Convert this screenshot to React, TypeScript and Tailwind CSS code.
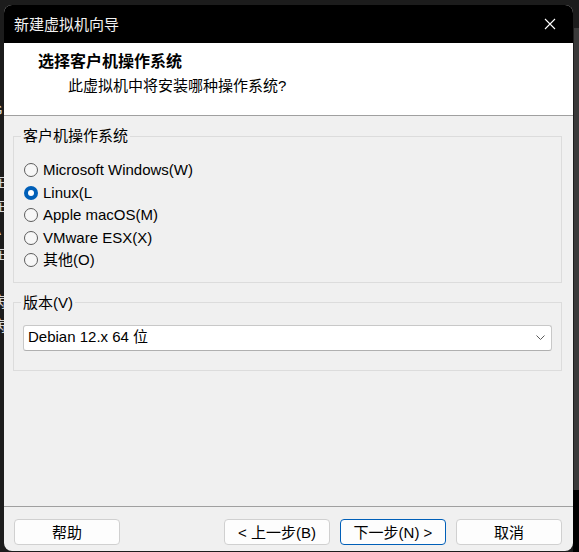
import React from "react";

const os = [
  { label: "Microsoft Windows(W)", checked: false },
  { label: "Linux(L", checked: true },
  { label: "Apple macOS(M)", checked: false },
  { label: "VMware ESX(X)", checked: false },
  { label: "其他(O)", checked: false },
];

// bits of the window behind the dialog, peeking out on the left
const behind = ["G", "", "(", "在", "在", "A", "在", "", "病", "病"];

function Radio({ checked }: { checked: boolean }) {
  if (checked) {
    return (
      <span className="w-[14px] h-[14px] rounded-full bg-[#005fb8] flex items-center justify-center shrink-0">
        <span className="w-[6px] h-[6px] rounded-full bg-white" />
      </span>
    );
  }
  return <span className="w-[14px] h-[14px] rounded-full border border-[#5c5c5c] bg-[#f7f7f7] shrink-0" />;
}

function Button({ children, primary }: { children: React.ReactNode; primary?: boolean }) {
  return (
    <button
      className={
        primary
          ? "w-[106px] h-[26px] rounded-[4px] border border-[#005fb8] bg-[#fdfdfd] text-[15px] text-black leading-none"
          : "w-[106px] h-[26px] rounded-[4px] border border-[#d0d0d0] bg-[#fdfdfd] text-[15px] text-black leading-none"
      }
    >
      {children}
    </button>
  );
}

export default function App() {
  return (
    <div className="w-[579px] h-[552px] bg-[#1c1c1c] flex overflow-hidden font-['Liberation_Sans','Noto_Sans_CJK_SC',sans-serif]">
      {/* left edge of the app behind */}
      <div className="w-[4px] overflow-hidden flex flex-col pt-[98px] text-[15px] text-[#d8d8d8]">
        {behind.map((c, i) => (
          <div key={i} className="h-[24px] leading-[24px] -ml-[9px] whitespace-nowrap">
            {c || "\u00a0"}
          </div>
        ))}
      </div>

      {/* dialog */}
      <div className="w-[569px] h-[546px] mt-[5px] rounded-[8px] overflow-hidden flex flex-col bg-[#f0f0f0]">
        {/* title bar */}
        <div className="h-[38px] bg-black flex items-center justify-between shrink-0">
          <span className="pl-[10px] text-[15px] text-[#f2f2f2] leading-none">新建虚拟机向导</span>
          <div className="w-[46px] h-full flex items-center justify-center">
            <svg width="12" height="12" viewBox="0 0 12 12">
              <path d="M1 1L11 11M11 1L1 11" stroke="#fff" strokeWidth="1.1" />
            </svg>
          </div>
        </div>

        {/* header */}
        <div className="h-[73px] bg-white border-b border-[#a0a0a0] pt-[9px] pl-[34px] shrink-0">
          <div className="text-[16px] font-bold leading-[20px] text-black">选择客户机操作系统</div>
          <div className="mt-[4px] pl-[30px] text-[15px] leading-[20px] text-black">此虚拟机中将安装哪种操作系统?</div>
        </div>

        {/* body */}
        <div className="flex-1 flex flex-col pl-[9px] pr-[11px] pt-[10px]">
          <fieldset className="border border-[#dcdcdc] pl-[7px] pb-[10px]">
            <legend className="px-[2px] text-[15px] leading-[20px] text-black">客户机操作系统</legend>
            <div className="flex flex-col pt-[13px] pl-[3px]">
              {os.map((o) => (
                <label key={o.label} className="h-[22.5px] flex items-center gap-[5px] text-[15px] text-black">
                  <Radio checked={o.checked} />
                  <span>{o.label}</span>
                </label>
              ))}
            </div>
          </fieldset>

          <fieldset className="mt-[10px] border border-[#dcdcdc] pl-[7px] pr-[9px] pb-[19px]">
            <legend className="px-[2px] text-[15px] leading-[20px] text-black">版本(V)</legend>
            <div className="mt-[12px] ml-[2px] h-[26px] rounded-[3px] border border-[#c8c8c8] border-b-[#b0b0b0] bg-white flex items-center justify-between pl-[4px] pr-[6px]">
              <span className="text-[15px] text-black">Debian 12.x 64 位</span>
              <svg width="9" height="5" viewBox="0 0 9 5">
                <path d="M0.5 0.5L4.5 4.5L8.5 0.5" fill="none" stroke="#5a5a5a" strokeWidth="1" />
              </svg>
            </div>
          </fieldset>

          <div className="flex-1" />
        </div>

        {/* footer */}
        <div className="border-t border-[#a0a0a0] pt-[12px] pb-[6px] pl-[10px] pr-[11px] flex items-center shrink-0">
          <Button>帮助</Button>
          <div className="flex-1" />
          <div className="flex gap-[10px]">
            <Button>&lt; 上一步(B)</Button>
            <Button primary>下一步(N) &gt;</Button>
            <Button>取消</Button>
          </div>
        </div>
      </div>

      {/* right edge */}
      <div className="w-[6px] flex flex-col">
        <div className="h-[28px] bg-[#1c1c1c]" />
        <div className="flex-1 bg-[#3a3a3a] ml-[1px]" />
        <div className="h-[62px] bg-black" />
      </div>
    </div>
  );
}
